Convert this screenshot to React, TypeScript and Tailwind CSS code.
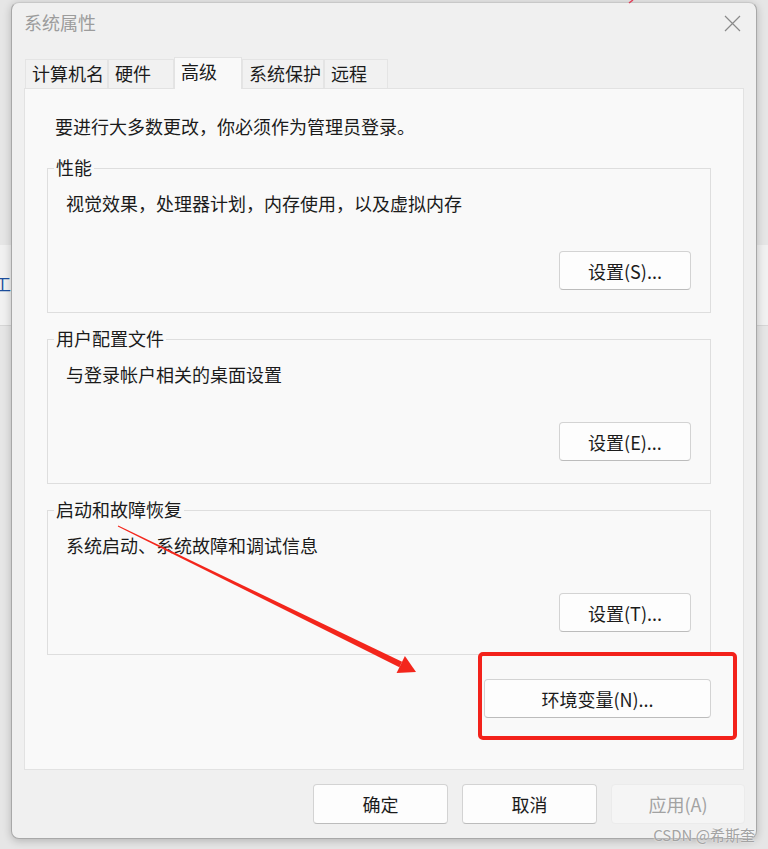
const font = "font-['Microsoft_YaHei_UI','Noto_Sans_CJK_SC',sans-serif]";

const tabs = [
  { label: "计算机名", width: "w-[83px]" },
  { label: "硬件", width: "w-[66px]" },
  { label: "高级", width: "w-[68px]", active: true },
  { label: "系统保护", width: "w-[82px]" },
  { label: "远程", width: "w-[64px]" },
];

const groups = [
  { title: "性能", text: "视觉效果，处理器计划，内存使用，以及虚拟内存", button: "设置(S)..." },
  { title: "用户配置文件", text: "与登录帐户相关的桌面设置", button: "设置(E)..." },
  { title: "启动和故障恢复", text: "系统启动、系统故障和调试信息", button: "设置(T)..." },
];

function DialogButton({
  children,
  className = "",
  disabled = false,
}: {
  children: React.ReactNode;
  className?: string;
  disabled?: boolean;
}) {
  return (
    <button
      disabled={disabled}
      className={
        "flex items-center justify-center rounded-[4px] border text-[18px] leading-[24px] " +
        (disabled
          ? "border-[#ebebeb] bg-[#f5f5f5] text-[#a2a2a2] "
          : "border-[#d3d3d3] border-b-[#bcbcbc] bg-[#fdfdfd] text-[#1b1b1b] ") +
        className
      }>
      {children}
    </button>
  );
}

function GroupBox({ title, text, button }: { title: string; text: string; button: string }) {
  return (
    <div className="relative flex h-[145px] w-[664px] flex-col border border-[#dedede] pl-[18px] pt-[22px]">
      <span className="absolute -top-[14px] left-[6px] bg-[#f9f9f9] px-[2px] leading-[24px]">
        {title}
      </span>
      <p className="leading-[24px]">{text}</p>
      <div className="mt-[36px] flex justify-end pr-[19px]">
        <DialogButton className="h-[39px] w-[132px]">{button}</DialogButton>
      </div>
    </div>
  );
}

// red callout drawn on top of the dialog
function Arrow() {
  const tip = [416, 672];
  const start = [118, 526];
  const dx = tip[0] - start[0];
  const dy = tip[1] - start[1];
  const len = Math.hypot(dx, dy);
  const u = [dx / len, dy / len];
  const n = [-u[1], u[0]];
  const headLen = 17;
  const headHalf = 9.5;
  const base = [tip[0] - u[0] * headLen, tip[1] - u[1] * headLen];
  const p = (x: number, y: number) => `${x.toFixed(1)},${y.toFixed(1)}`;
  const shaft = [
    p(start[0] + n[0] * 0.4, start[1] + n[1] * 0.4),
    p(base[0] + n[0] * 3, base[1] + n[1] * 3),
    p(base[0] - n[0] * 3, base[1] - n[1] * 3),
    p(start[0] - n[0] * 0.4, start[1] - n[1] * 0.4),
  ].join(" ");
  const head = [
    p(tip[0], tip[1]),
    p(base[0] + n[0] * headHalf, base[1] + n[1] * headHalf),
    p(base[0] - n[0] * headHalf, base[1] - n[1] * headHalf),
  ].join(" ");
  return (
    <svg className="pointer-events-none absolute left-0 top-0" width="768" height="849">
      <polygon points={shaft} fill="#f3261c" />
      <polygon points={head} fill="#f3261c" />
      <line x1="629" y1="3" x2="633" y2="0" stroke="#e0405a" strokeWidth="1.5" />
    </svg>
  );
}

export default function App() {
  return (
    <div className={`relative h-[849px] w-[768px] overflow-hidden bg-[#e6e6e6] ${font} text-[#1b1b1b]`}>
      {/* desktop strip peeking out behind the dialog */}
      <div className="absolute left-0 right-0 top-[245px] h-[81px] border-b border-[#d6d6d6] bg-[#f1f1f1]">
        <span className="absolute -left-[6px] top-[27px] text-[17px] leading-[24px] text-[#1d4f9e]">工</span>
      </div>

      <div className="absolute left-[11px] top-[2px] flex h-[837px] w-[746px] flex-col rounded-[8px] border border-[#a8a8a8] border-t-[#c8c8c8] bg-[#f0f0f0] shadow-[0_2px_8px_rgba(0,0,0,0.22)]">
        <div className="flex h-[54px] items-start justify-between pl-[12px] pr-[15px] pt-[7px]">
          <span className="text-[18px] leading-[24px] text-[#9c9c9c]">系统属性</span>
          <svg className="mt-[5px]" width="17" height="17" viewBox="0 0 17 17">
            <path d="M1 1 L16 16 M16 1 L1 16" stroke="#8a8a8a" strokeWidth="1.2" fill="none" />
          </svg>
        </div>

        <div className="flex h-[31px] items-end pl-[13px] text-[18px]">
          {tabs.map((t) =>
            t.active ? (
              <div
                key={t.label}
                className={`${t.width} relative z-10 -mb-px flex h-[32px] items-start border border-b-0 border-[#e3e3e3] bg-[#f9f9f9] pl-[6px] pt-[1px] leading-[24px]`}>
                {t.label}
              </div>
            ) : (
              <div
                key={t.label}
                className={`${t.width} flex h-[29px] items-start border border-b-0 border-[#e4e4e4] bg-[#f1f1f1] pl-[6px] pt-[1px] leading-[24px]`}>
                {t.label}
              </div>
            ),
          )}
        </div>

        <div className="mx-[12px] flex h-[682px] flex-col border border-[#e2e2e2] bg-[#f9f9f9] pl-[22px] pr-[32px] text-[18px]">
          <p className="ml-[8px] mt-[25px] leading-[24px]">要进行大多数更改，你必须作为管理员登录。</p>
          <div className="mt-[30px] flex flex-col gap-[26px]">
            {groups.map((g) => (
              <GroupBox key={g.title} {...g} />
            ))}
          </div>
          <div className="mt-[24px] flex justify-end">
            <DialogButton className="h-[39px] w-[227px]">环境变量(N)...</DialogButton>
          </div>
        </div>

        <div className="mt-[14px] flex justify-end gap-[14px] pr-[11px]">
          <DialogButton className="h-[40px] w-[135px]">确定</DialogButton>
          <DialogButton className="h-[40px] w-[135px]">取消</DialogButton>
          <DialogButton className="h-[40px] w-[134px]" disabled>
            应用(A)
          </DialogButton>
        </div>
      </div>

      <div className="absolute left-[478px] top-[652px] h-[88px] w-[259px] rounded-[5px] border-[4px] border-[#f3221b]" />
      <Arrow />

      <span className="absolute bottom-[5px] right-[13px] text-[15px] leading-[18px] text-[#a3a3a3] [text-shadow:0_0_2px_#ffffff]">
        CSDN @希斯奎
      </span>
    </div>
  );
}
